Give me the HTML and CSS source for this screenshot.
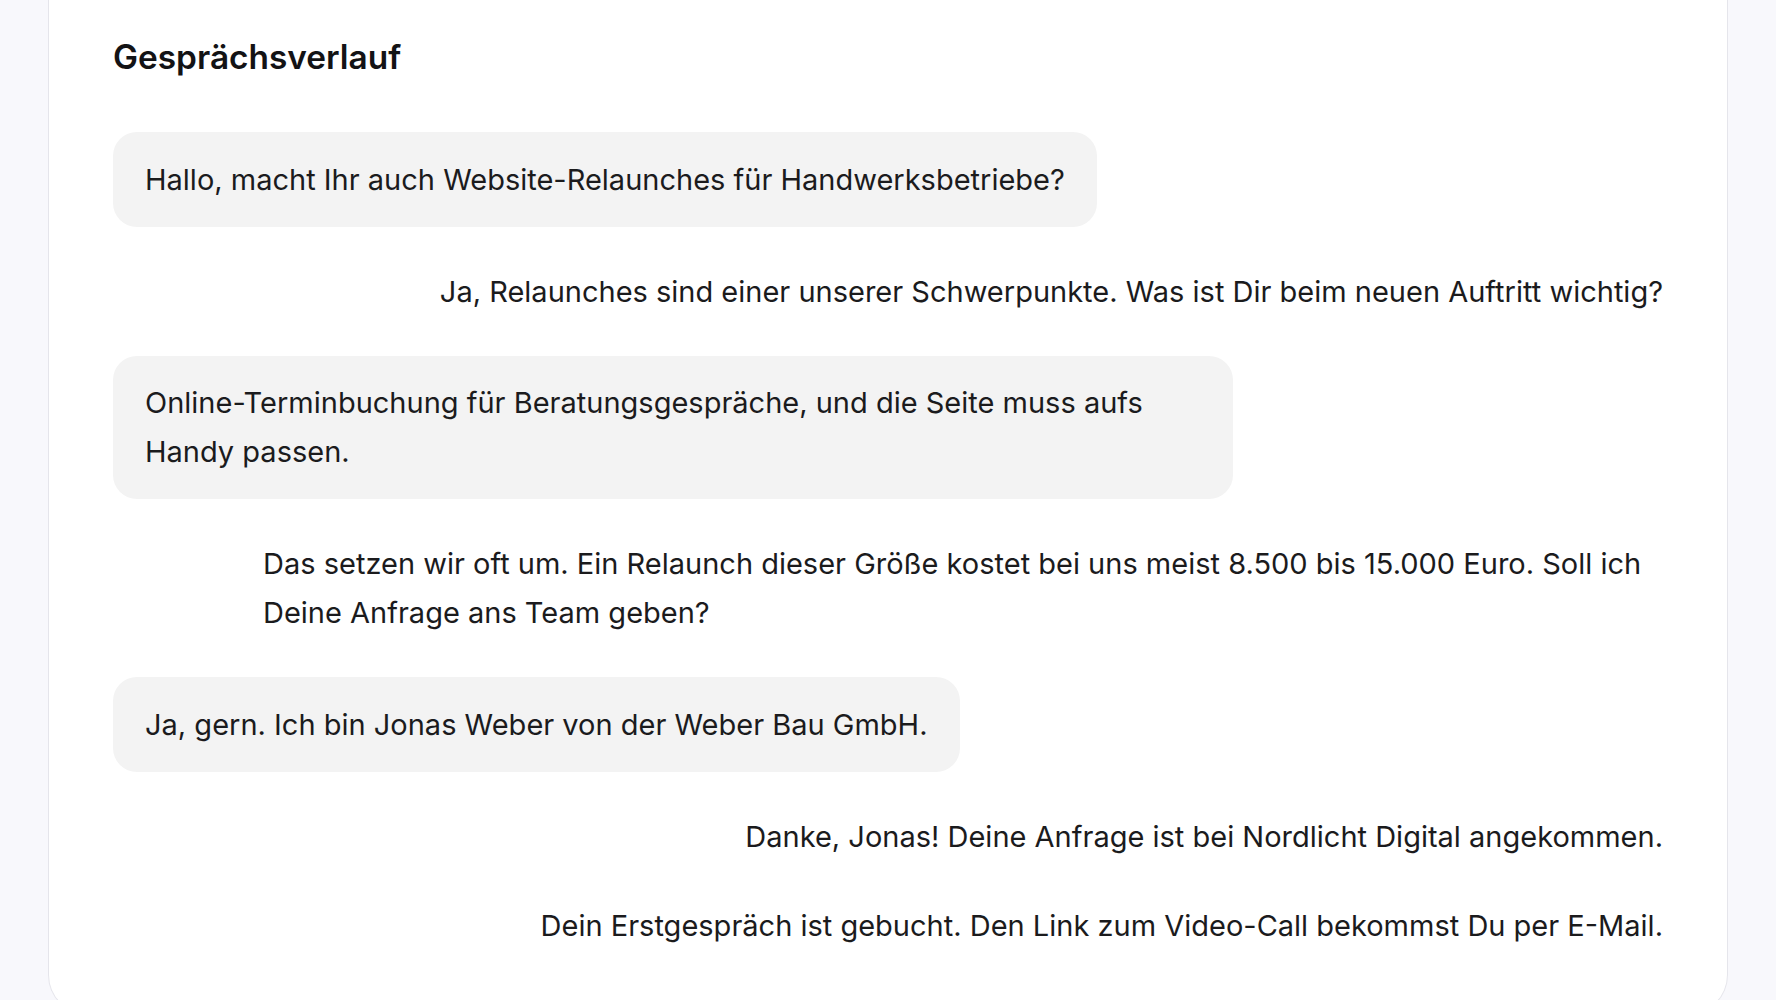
FILE: index.html
```html
<!DOCTYPE html>
<html lang="de">
<head>
<meta charset="utf-8">
<title>Gesprächsverlauf</title>
<link rel="stylesheet" href="styles.css">
</head>
<body>
<main class="page">
  <section class="card">
    <h2 class="title">Gesprächsverlauf</h2>
    <div class="thread">
      <div class="msg msg-user">Hallo, macht Ihr auch Website-Relaunches für Handwerksbetriebe?</div>
      <div class="msg msg-bot">Ja, Relaunches sind einer unserer Schwerpunkte. Was ist Dir beim neuen Auftritt wichtig?</div>
      <div class="msg msg-user">Online-Terminbuchung für Beratungsgespräche, und die Seite muss aufs Handy passen.</div>
      <div class="msg msg-bot">Das setzen wir oft um. Ein Relaunch dieser Größe kostet bei uns meist 8.500 bis 15.000 Euro. Soll ich Deine Anfrage ans Team geben?</div>
      <div class="msg msg-user">Ja, gern. Ich bin Jonas Weber von der Weber Bau GmbH.</div>
      <div class="msg msg-bot">Danke, Jonas! Deine Anfrage ist bei Nordlicht Digital angekommen.</div>
      <div class="msg msg-bot">Dein Erstgespräch ist gebucht. Den Link zum Video-Call bekommst Du per E-Mail.</div>
    </div>
  </section>
</main>
</body>
</html>
```

FILE: styles.css
```css
html, body {
  margin: 0;
  padding: 0;
  overflow: hidden;
}

body {
  background: #f8f8fc;
  font-family: Inter, "Noto Sans", "Liberation Sans", sans-serif;
  color: #1b1b1d;
}

.page {
  padding: 0 48px;
}

.card {
  background: #ffffff;
  border: 1px solid #e5e5eb;
  border-top: 0;
  border-radius: 0 0 40px 40px;
  padding: 37px 64px 64px;
}

.title {
  margin: 0 0 55px;
  font-size: 33.4px;
  line-height: 40px;
  font-weight: 600;
  color: #131315;
}

.thread {
  display: flex;
  flex-direction: column;
  gap: 40px;
}

.msg {
  font-size: 29px;
  line-height: 49px;
}

.msg-user {
  align-self: flex-start;
  max-width: 1120px;
  box-sizing: border-box;
  background: #f3f3f3;
  border-radius: 24px;
  padding: 22.8px 32px;
}

.msg-bot {
  align-self: flex-end;
  max-width: 1400px;
}
```
